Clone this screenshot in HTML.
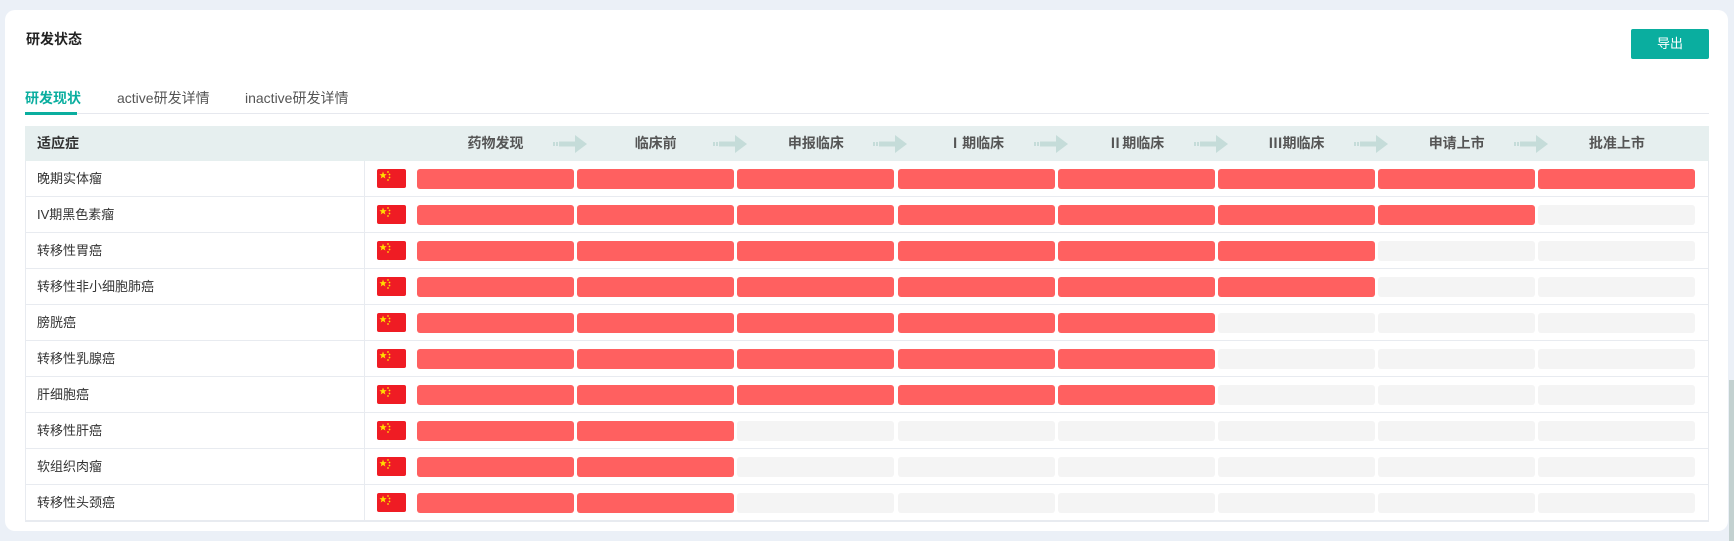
<!DOCTYPE html>
<html><head><meta charset="utf-8"><style>
*{margin:0;padding:0;box-sizing:border-box}
body{width:1734px;height:541px;background:#ebf0f7;font-family:"Liberation Sans","Noto Sans CJK SC",sans-serif;position:relative;overflow:hidden}
.card{position:absolute;left:5px;top:10px;width:1723px;height:521px;background:#fff;border-radius:10px}
.sb{position:absolute;left:1729px;top:380px;width:5px;height:161px;background:#c3d1d0}
.abs{position:absolute}
.title{left:26px;top:29px;font-size:14px;font-weight:bold;color:#222}
.btn{left:1631px;top:29px;width:78px;height:30px;background:#0aae9f;color:#fff;font-size:13px;text-align:center;line-height:30px;border-radius:2px}
.tab{top:88px;font-size:14px;color:#555}
.tabline{left:25px;top:113px;width:1684px;height:1px;background:#e6e8ee}
.ul{left:25px;top:112px;width:52px;height:3px;background:#0aae9f}
.tbl{left:25px;top:126px;width:1684px;height:396px;border:1px solid #e8ebf0;border-top:none}
.hdr{left:25px;top:126px;width:1684px;height:35px;background:#e6efef}
.hl{top:126px;line-height:35px;font-size:14px;font-weight:bold;color:#555;text-align:center;width:157px}
.row{left:25px;width:1684px;height:36px;border-bottom:1px solid #e8ebf0}
.rt{left:37px;font-size:13px;color:#333;line-height:36px}
.vd{left:364px;top:161px;width:1px;height:361px;background:#e8ebf0}
.flag{left:377px;width:29px;height:19px;background:#ef1c24;border-radius:2px}
.bar{width:157px;height:20px;border-radius:3px}
</style></head><body>
<div class="card"></div><div class="sb"></div>
<div class="abs title">研发状态</div>
<div class="abs btn">导出</div>
<div class="abs tab" style="left:25px;color:#0aae9f;font-weight:bold">研发现状</div>
<div class="abs tab" style="left:117px">active研发详情</div>
<div class="abs tab" style="left:245px">inactive研发详情</div>
<div class="abs tabline"></div><div class="abs ul"></div>
<div class="abs tbl"></div>
<div class="abs hdr"></div>
<div class="abs" style="left:37px;top:126px;line-height:35px;font-size:14px;font-weight:bold;color:#333">适应症</div>
<div id="h"></div>
<div class="abs vd"></div>
<div id="rows"></div>
<script>
var st=["药物发现","临床前","申报临床","Ⅰ期临床","Ⅱ期临床","Ⅲ期临床","申请上市","批准上市"];
var names=["晚期实体瘤","IV期黑色素瘤","转移性胃癌","转移性非小细胞肺癌","膀胱癌","转移性乳腺癌","肝细胞癌","转移性肝癌","软组织肉瘤","转移性头颈癌"];
var prog=[8,7,6,6,5,5,5,2,2,2];
var h="";
for(var i=0;i<8;i++){var x=417+i*160.2;
h+='<div class="abs hl" style="left:'+x+'px">'+st[i]+'</div>';
if(i<7){var ax=x+136;h+='<svg class="abs" style="left:'+ax+'px;top:134px" width="36" height="20" viewBox="0 0 36 20"><g fill="#c5dcd9"><rect x="0" y="8" width="2" height="4"/><rect x="3" y="8" width="2" height="4"/><rect x="6" y="7.5" width="18" height="5"/><path d="M22 1 L34 10 L22 19 Z"/></g></svg>';}}
for(var r=0;r<10;r++){var y=161+r*36;
h+='<div class="abs row" style="top:'+y+'px"></div><div class="abs rt" style="top:'+y+'px">'+names[r]+'</div>';
h+='<div class="abs flag" style="top:'+(y+8)+'px"><svg width="29" height="19" viewBox="0 0 29 19"><path d="M6 2.5l1 2.6 2.7.1-2.1 1.7.8 2.6L6 8l-2.3 1.5.8-2.6-2.1-1.7 2.7-.1z" fill="#ffde00"/><circle cx="11" cy="3" r=".9" fill="#ffde00"/><circle cx="12.5" cy="5.5" r=".9" fill="#ffde00"/><circle cx="12.5" cy="8.5" r=".9" fill="#ffde00"/><circle cx="11" cy="11" r=".9" fill="#ffde00"/></svg></div>';
for(var i=0;i<8;i++){var x=417+i*160.2;
h+='<div class="abs bar" style="left:'+x+'px;top:'+(y+8)+'px;background:'+(i<prog[r]?'#ff6060':'#f4f4f4')+'"></div>';}}
document.getElementById('h').outerHTML=h;
</script>
</body></html>
